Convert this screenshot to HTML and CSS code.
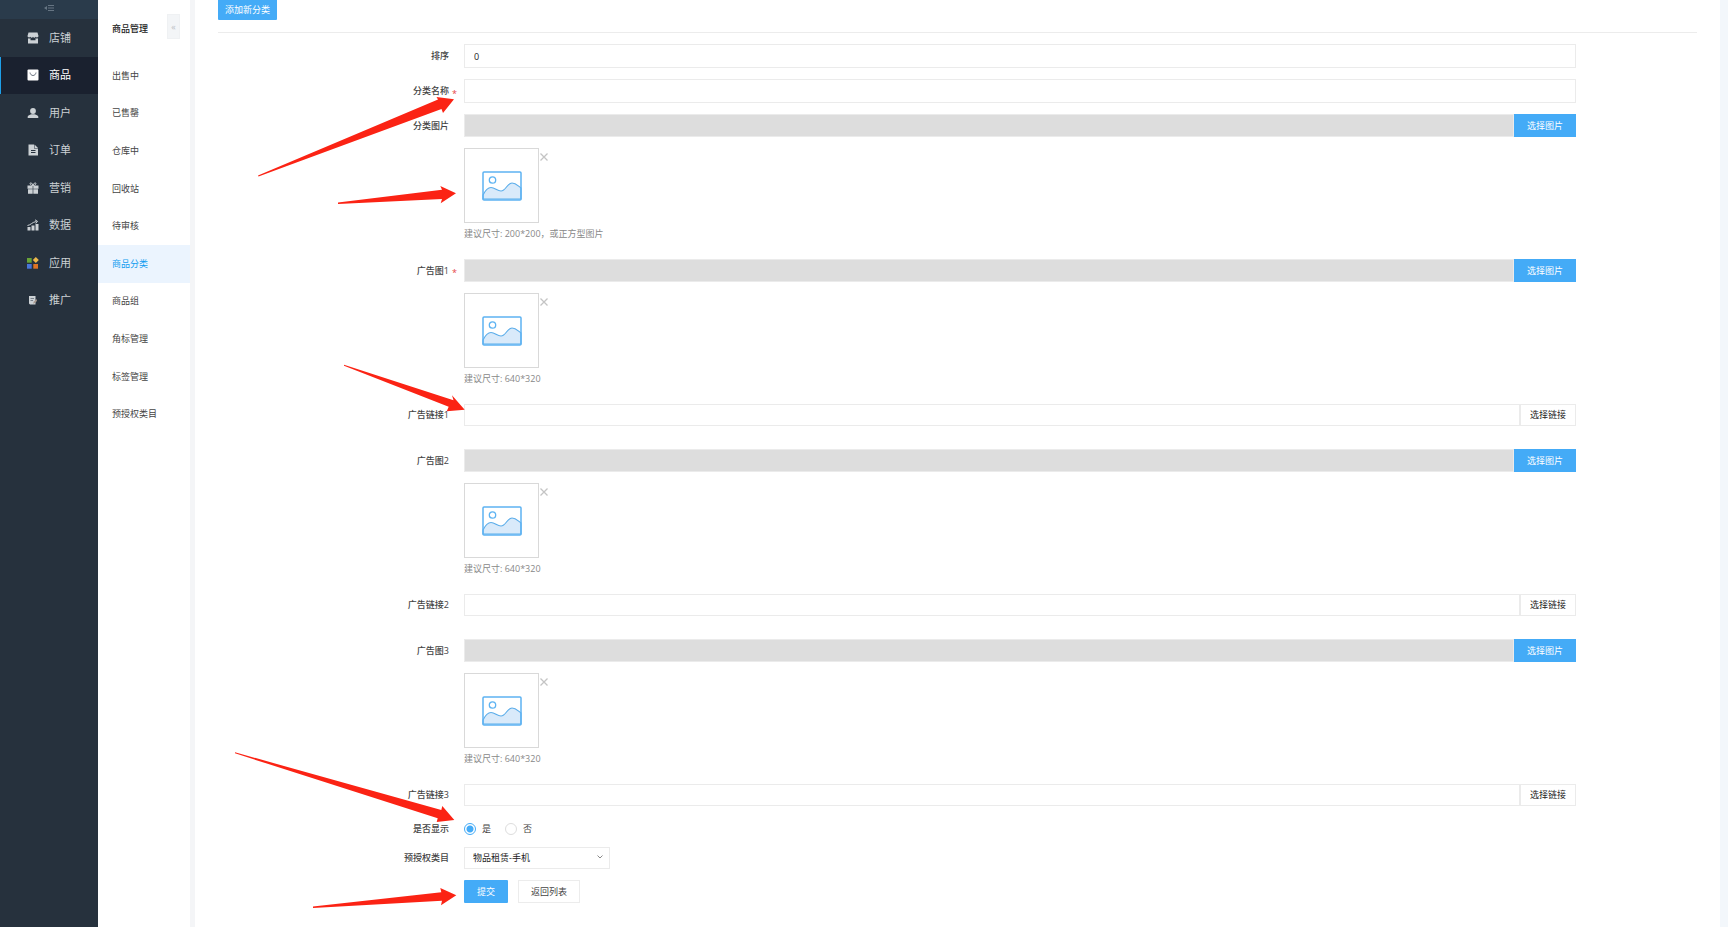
FILE: index.html
```html
<!DOCTYPE html>
<html lang="zh-CN">
  <head>
    <meta charset="UTF-8" />
    <meta name="viewport" content="width=device-width, initial-scale=1.0" />
    <title>商品分类</title>
    <link rel="stylesheet" href="styles.css">
  </head>
  <body>
    <!-- 公用图标 -->
    <svg class="sprite" aria-hidden="true">
      <symbol id="picture" viewBox="0 0 40 30">
        <path d="M1 24C3 20 6 16.500 9 16.500C13 16.500 15 20 19 20C24 20 25 12 30 12C34 12 36 15 39 17V28H1Z" fill="#d9eafa" stroke="#5badea" stroke-width="1.200" />
        <rect x="1" y="1" width="38" height="28" rx="1" fill="none" stroke="#5db3f2" stroke-width="1.500" />
        <circle cx="10.500" cy="9" r="3.200" fill="none" stroke="#5db3f2" stroke-width="1.300" />
      </symbol>
      <symbol id="close" viewBox="0 0 8 8">
        <path d="M.5.5L7.500 7.500M7.500.5L.5 7.500" stroke="#c4c4c4" stroke-width="1.300" />
      </symbol>
    </svg>

    <div class="layout">
      <nav class="sidebar">
        <button class="fold" type="button" aria-label="收起">
          <svg width="10" height="8" viewBox="0 0 10 8"><path d="M4 1.500H10M4 4H10M4 6.500H10" stroke="#667583" /><path d="M3 2V6L0 4Z" fill="#667583" /></svg>
        </button>
        <div class="menu">
          <a href="#">
            <svg viewBox="0 0 12 12"><path d="M1.500.5H10.500L11.500 4C11.500 5.500 9.500 6 8.700 4.800C8 6 6.500 6 6 4.800C5.500 6 4 6 3.300 4.800C2.500 6 .5 5.500.5 4Z" /><path d="M1 6.300C2 6.700 3 6.500 3.500 6.200V8.200H8.500V6.200C9.500 6.700 10.300 6.600 11 6.300V11.500H1Z" /></svg>
            店铺
          </a>
          <a href="#" class="active">
            <svg viewBox="0 0 12 12"><rect x=".5" y=".5" width="11" height="11" rx="1" /><path d="M3 3.500C3.500 7.500 8.500 7.500 9 3.500" fill="none" stroke="#717985" /></svg>
            商品
          </a>
          <a href="#">
            <svg viewBox="0 0 12 12"><circle cx="6" cy="4" r="2.900" /><path d="M.7 11V9.500C1.500 8 3.500 7.800 4.500 7.300H7.500C8.500 7.800 10.500 8 11.300 9.500V11Z" /></svg>
            用户
          </a>
          <a href="#">
            <svg viewBox="0 0 12 12"><path d="M1.500.5H7V4.500H11V11.500H1.500Z" /><path d="M7.500.5L11 4H7.500Z" /><path d="M4 6.500H8.500M4 8.500H8.500" stroke="#26313d" /></svg>
            订单
          </a>
          <a href="#">
            <svg viewBox="0 0 12 12"><path d="M.5 3.500H5.700V6.700H.5ZM6.300 3.500H11.500V6.700H6.300ZM1 7.200H5.700V11.800H1ZM6.300 7.200H11V11.800H6.300Z" /><path d="M6 3.500C3 3.500 2.500 1 3.700.8C5 .6 6 3.500 6 3.500C6 3.500 7 .6 8.300.8C9.500 1 9 3.500 6 3.500Z" fill="none" stroke="#ccd1d5" /></svg>
            营销
          </a>
          <a href="#">
            <svg viewBox="0 0 12 12"><path d="M.5 8H3.500V11.500H.5ZM4.500 6.500H7.500V11.500H4.500ZM8.500 5H11.500V11.500H8.500Z" /><path d="M.5 6.500C4 6 5 3 9.500 2.500M8 .8L10.500 2.300L8.800 4.500" fill="none" stroke="#ccd1d5" /></svg>
            数据
          </a>
          <a href="#">
            <svg viewBox="0 0 12 12"><path d="M0 1H4.700V5.700H0Z" fill="#68a338" /><path d="M8.800 0L11.800 3L8.800 6L5.800 3Z" fill="#edb84c" /><path d="M0 7H4.700V11.700H0Z" fill="#4876d9" /><path d="M6.300 7H11V11.700H6.300Z" fill="#dd7425" /></svg>
            应用
          </a>
          <a href="#">
            <svg viewBox="0 0 12 12"><path d="M2 2H8.500V10.500H3L2 9.500Z" /><path d="M3.500 4.500H7M3.500 6.500H6" stroke="#77808a" /><path d="M9.500 5L6.500 8V10L10 7Z" fill="#a8978b" /></svg>
            推广
          </a>
        </div>
      </nav>

      <aside class="submenu">
        <div class="submenu-head">
          <h2>商品管理</h2>
          <button type="button" aria-label="收起子菜单">«</button>
        </div>
        <div class="submenu-list">
          <a href="#">出售中</a>
          <a href="#">已售罄</a>
          <a href="#">仓库中</a>
          <a href="#">回收站</a>
          <a href="#">待审核</a>
          <a href="#" class="active">商品分类</a>
          <a href="#">商品组</a>
          <a href="#">角标管理</a>
          <a href="#">标签管理</a>
          <a href="#">预授权类目</a>
        </div>
      </aside>

      <main class="content">
        <div class="toolbar">
          <button class="btn btn-primary btn-add" type="button">添加新分类</button>
        </div>
        <form class="form">
          <div class="row">
            <label for="sort">排序</label>
            <input class="text" id="sort" type="text" value="0" />
          </div>
          <div class="row">
            <label for="name">分类名称<span class="star">*</span></label>
            <input class="text" id="name" type="text" />
          </div>
          <div class="row">
            <label for="pic">分类图片</label>
            <div class="group">
              <input class="text" id="pic" type="text" readonly />
              <button class="btn btn-primary" type="button">选择图片</button>
            </div>
          </div>
          <div class="preview">
            <div class="thumb"><svg><use href="#picture" /></svg></div>
            <button type="button" aria-label="删除"><svg><use href="#close" /></svg></button>
            <p>建议尺寸: 200*200，或正方型图片</p>
          </div>

          <div class="row">
            <label for="ad1">广告图1<span class="star">*</span></label>
            <div class="group">
              <input class="text" id="ad1" type="text" readonly />
              <button class="btn btn-primary" type="button">选择图片</button>
            </div>
          </div>
          <div class="preview">
            <div class="thumb"><svg><use href="#picture" /></svg></div>
            <button type="button" aria-label="删除"><svg><use href="#close" /></svg></button>
            <p>建议尺寸: 640*320</p>
          </div>
          <div class="row row-link">
            <label for="link1">广告链接1</label>
            <div class="group">
              <input class="text" id="link1" type="text" />
              <button class="btn btn-link" type="button">选择链接</button>
            </div>
          </div>

          <div class="row">
            <label for="ad2">广告图2</label>
            <div class="group">
              <input class="text" id="ad2" type="text" readonly />
              <button class="btn btn-primary" type="button">选择图片</button>
            </div>
          </div>
          <div class="preview">
            <div class="thumb"><svg><use href="#picture" /></svg></div>
            <button type="button" aria-label="删除"><svg><use href="#close" /></svg></button>
            <p>建议尺寸: 640*320</p>
          </div>
          <div class="row row-link">
            <label for="link2">广告链接2</label>
            <div class="group">
              <input class="text" id="link2" type="text" />
              <button class="btn btn-link" type="button">选择链接</button>
            </div>
          </div>

          <div class="row">
            <label for="ad3">广告图3</label>
            <div class="group">
              <input class="text" id="ad3" type="text" readonly />
              <button class="btn btn-primary" type="button">选择图片</button>
            </div>
          </div>
          <div class="preview">
            <div class="thumb"><svg><use href="#picture" /></svg></div>
            <button type="button" aria-label="删除"><svg><use href="#close" /></svg></button>
            <p>建议尺寸: 640*320</p>
          </div>
          <div class="row row-link row-last">
            <label for="link3">广告链接3</label>
            <div class="group">
              <input class="text" id="link3" type="text" />
              <button class="btn btn-link" type="button">选择链接</button>
            </div>
          </div>

          <div class="row" role="radiogroup" aria-labelledby="show">
            <span class="label" id="show">是否显示</span>
            <div class="radios">
              <label><input type="radio" name="show" checked />是</label>
              <label><input type="radio" name="show" />否</label>
            </div>
          </div>
          <div class="row">
            <label for="category">预授权类目</label>
            <div class="select">
              <select id="category">
                <option>物品租赁-手机</option>
              </select>
              <svg viewBox="0 0 6 4"><path d="M.5.5L3 3L5.500.5" fill="none" stroke="#888" /></svg>
            </div>
          </div>
          <div class="actions">
            <button class="btn btn-primary btn-submit" type="submit">提交</button>
            <button class="btn btn-back" type="button">返回列表</button>
          </div>
        </form>
      </main>
    </div>

    <!-- 指引箭头 -->
    <svg class="arrows" width="480" height="927" viewBox="0 0 480 927" aria-hidden="true">
      <path d="M258 175.500L438 99.500L436.500 97L454 99.300L443 113L441.500 109L258.500 176.500Z" />
      <path d="M338 202.500L442 189.700L440.300 186L456 193.300L440.700 203.300L442 199L338 204Z" />
      <path d="M344 364.800L453.500 400.300L452 395.300L464.700 409.700L446.700 411.300L448.700 406.700L344 365.800Z" />
      <path d="M235 752.300L441.300 810L442.300 806L454.300 820L436.700 822L437.700 818.300L235 753.300Z" />
      <path d="M313 906.500L441.300 892.300L440.300 888L456.300 895.300L441 905.300L442 900.700L313 908Z" />
    </svg>
  </body>
</html>
```

FILE: styles.css
```css
* {
  box-sizing: border-box;
  margin: 0;
  padding: 0;
}
body {
  position: relative;
  font-family: "Open Sans", "Noto Sans CJK SC", sans-serif;
  font-size: 9px;
  line-height: 14px;
  color: #444;
  background-color: #f3f7fb;
}
a {
  color: inherit;
  text-decoration: none;
}
button,
input,
select {
  font: inherit;
  color: inherit;
}
button {
  border: none;
  background: none;
  cursor: pointer;
}
.sprite {
  display: none;
}
.layout {
  display: flex;
  min-height: 100vh;
}

/* 主菜单 */
.sidebar {
  flex: none;
  width: 98px;
  background-color: #26313d;
}
.fold {
  display: flex;
  align-items: center;
  justify-content: center;
  width: 100%;
  height: 19px;
  padding-bottom: 3px;
  background-color: #2a3b4b;
}
.menu {
  display: flex;
  flex-direction: column;
  height: 300px;
}
.menu a {
  flex: 1;
  display: flex;
  align-items: center;
  gap: 10px;
  padding-left: 26px;
  border-left: 1px solid transparent;
  font-size: 11px;
  color: #ccd1d5;
}
.menu a.active {
  background-color: #1a212f;
  border-left-color: #1e9fe8;
  color: #fff;
}
.menu svg {
  width: 12px;
  height: 12px;
  fill: currentColor;
}

/* 子菜单 */
.submenu {
  flex: none;
  width: 97px;
  background-color: #fff;
  border-right: 5px solid #f4f5f7;
}
.submenu-head {
  display: flex;
  align-items: center;
  justify-content: space-between;
  height: 57px;
  padding: 0 10px 0 14px;
}
.submenu-head h2 {
  font-size: 9px;
  font-weight: 500;
  color: #222;
}
.submenu-head button {
  width: 13px;
  height: 25px;
  margin-bottom: 4px;
  background-color: #f3f5f7;
  border: 1px solid #eff1f3;
  color: #bcc1c6;
}
.submenu-list {
  display: flex;
  flex-direction: column;
  height: 376px;
}
.submenu-list a {
  flex: 1;
  display: flex;
  align-items: center;
  padding-left: 14px;
}
.submenu-list a.active {
  background-color: #ebf4fe;
  color: #109cf0;
}

/* 内容区 */
.content {
  flex: 1;
  margin-right: 8px;
  padding: 0 23px 24px;
  background-color: #fff;
}
.toolbar {
  height: 33px;
  border-bottom: 1px solid #ececec;
}
.btn {
  flex: none;
  height: 23px;
  text-align: center;
}
.btn-primary {
  width: 62px;
  background-color: #44abf7;
  color: #fff;
}
.btn-add {
  width: 59px;
  height: 20px;
  border-radius: 0 0 1px 1px;
}
.form {
  display: flex;
  flex-direction: column;
  padding: 11px 121px 0 0;
}
.row {
  display: flex;
  align-items: center;
  margin-bottom: 11px;
}
.row > label,
.label {
  flex: none;
  width: 246px;
  padding-right: 15px;
  text-align: right;
  font-weight: 500;
}
.star {
  display: inline-block;
  width: 12px;
  margin-left: 3px;
  margin-right: -15px;
  line-height: 9px;
  vertical-align: sub;
  text-align: left;
  color: #e64545;
}
.text {
  flex: 1;
  min-width: 0;
  height: 24px;
  padding: 0 9px;
  border: 1px solid #ebebeb;
  background-color: #fff;
  color: #222;
  outline: none;
}
.group {
  flex: 1;
  display: flex;
}
.group .text {
  height: 23px;
}
.group .text[readonly] {
  background-color: #ddd;
}
.preview {
  display: grid;
  grid-template-columns: 75px 8px;
  grid-template-rows: 75px 22px;
  column-gap: 1px;
  margin: 0 0 14px 246px;
}
.thumb {
  display: flex;
  align-items: center;
  justify-content: center;
  border: 1px solid #d9d9d9;
}
.thumb svg {
  width: 40px;
  height: 30px;
}
.preview button {
  height: 8px;
  margin-top: 5px;
}
.preview button svg {
  display: block;
  width: 8px;
  height: 8px;
}
.preview p {
  grid-row: 2;
  line-height: 22px;
  white-space: nowrap;
  color: #888;
}
.row-link {
  margin-bottom: 23px;
}
.row-link .text,
.btn-link {
  height: 22px;
}
.row-last {
  margin-bottom: 16px;
}
.btn-link {
  width: 56px;
  border: 1px solid #ebebeb;
  color: #222;
}
.radios {
  display: flex;
  gap: 14px;
}
.radios label {
  display: flex;
  align-items: center;
  gap: 6px;
}
.radios input {
  appearance: none;
  width: 12px;
  height: 12px;
  border: 1px solid #ddd;
  border-radius: 50%;
}
.radios input:checked {
  border-color: #44abf7;
  background: radial-gradient(#44abf7 3px, #fff 4px);
}
.select {
  position: relative;
}
.select select {
  appearance: none;
  width: 146px;
  height: 22px;
  padding: 0 8px;
  border: 1px solid #ebebeb;
  background-color: #fff;
  color: #222;
}
.select svg {
  position: absolute;
  top: 8px;
  right: 7px;
  width: 6px;
  height: 4px;
  pointer-events: none;
}
.actions {
  display: flex;
  gap: 10px;
  margin-left: 246px;
}
.btn-submit {
  width: 44px;
  border-radius: 1px;
}
.btn-back {
  width: 62px;
  border: 1px solid #ececec;
}

/* 箭头浮在表单上方 */
.arrows {
  position: absolute;
  top: 0;
  left: 0;
  fill: #fb2314;
  pointer-events: none;
}
```
